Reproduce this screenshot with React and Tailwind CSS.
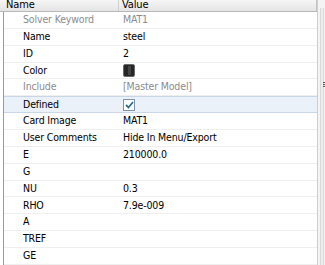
import React from "react";

const rows = [
  { k: "Solver Keyword", v: "MAT1", dim: true },
  { k: "Name", v: "steel" },
  { k: "ID", v: "2" },
  { k: "Color", v: "__color" },
  { k: "Include", v: "[Master Model]", dim: true },
  { k: "Defined", v: "__check", sel: true },
  { k: "Card Image", v: "MAT1" },
  { k: "User Comments", v: "Hide In Menu/Export" },
  { k: "E", v: "210000.0" },
  { k: "G", v: "" },
  { k: "NU", v: "0.3" },
  { k: "RHO", v: "7.9e-009" },
  { k: "A", v: "" },
  { k: "TREF", v: "" },
  { k: "GE", v: "" },
];

function Swatch() {
  return (
    <div className="w-[12px] h-[13px] rounded-[2px] bg-[#262626] border border-[#6a6a6a] flex items-center justify-center">
      <div className="w-[3px] h-[9px] bg-[#454545]" />
    </div>
  );
}

function Check() {
  return (
    <div className="w-[12px] h-[12px] border border-[#7d93ab] bg-white flex items-center justify-center">
      <svg width="9" height="8" viewBox="0 0 9 8">
        <path d="M1 4 L3.5 6.5 L8 1" fill="none" stroke="#2c6e8c" strokeWidth="1.8" />
      </svg>
    </div>
  );
}

export default function App() {
  return (
    <div
      className="w-[325px] h-[265px] bg-white overflow-hidden flex text-[10.5px] tracking-[-0.15px] text-black"
      style={{ fontFamily: '"DejaVu Sans Condensed", "Liberation Sans", sans-serif' }}
    >
      <div className="w-[317px] flex flex-col">
        <div className="h-[12px] flex bg-gradient-to-b from-[#f6f6f6] to-[#e4e4e4] border-b border-[#b9b9b9] text-[11px]">
          <div className="w-[119px] border-r border-[#cfcfcf] pl-[6px] leading-[10px]">Name</div>
          <div className="flex-1 pl-[3px] leading-[10px] border-r border-[#c4c4c4]">Value</div>
        </div>
        <div className="flex-1 flex flex-col ml-[3px] border-l border-[#9a9a9a]">
          {rows.map((r, i) => (
            <div
              key={i}
              className={
                "h-[16.86px] shrink-0 flex items-center border-b " +
                (r.sel ? "bg-[#eaf1f9] border-[#c8d6e6] border-t" : "border-[#efefef]")
              }
            >
              <div className={"w-[115px] pl-[19px] whitespace-nowrap " + (r.dim ? "text-[#8c8c8c]" : "")}>{r.k}</div>
              <div className={"flex-1 pl-[4px] whitespace-nowrap " + (r.dim ? "text-[#8c8c8c]" : "")}>
                {r.v === "__color" ? <Swatch /> : r.v === "__check" ? <Check /> : r.v}
              </div>
            </div>
          ))}
        </div>
      </div>
      <div className="flex-1 bg-[#f4f4f4] border-l border-[#cdcdcd] flex justify-center relative">
        <div className="w-[4px] mt-[8px] h-full border-l border-r border-[#d8d8d8] bg-[#ededed]" />
        <div className="absolute left-[5px] top-[82px] flex flex-col gap-[1px]">
          <div className="w-[3px] h-[1px] bg-[#555]" />
          <div className="w-[3px] h-[1px] bg-[#555]" />
          <div className="w-[3px] h-[1px] bg-[#555]" />
        </div>
      </div>
    </div>
  );
}
